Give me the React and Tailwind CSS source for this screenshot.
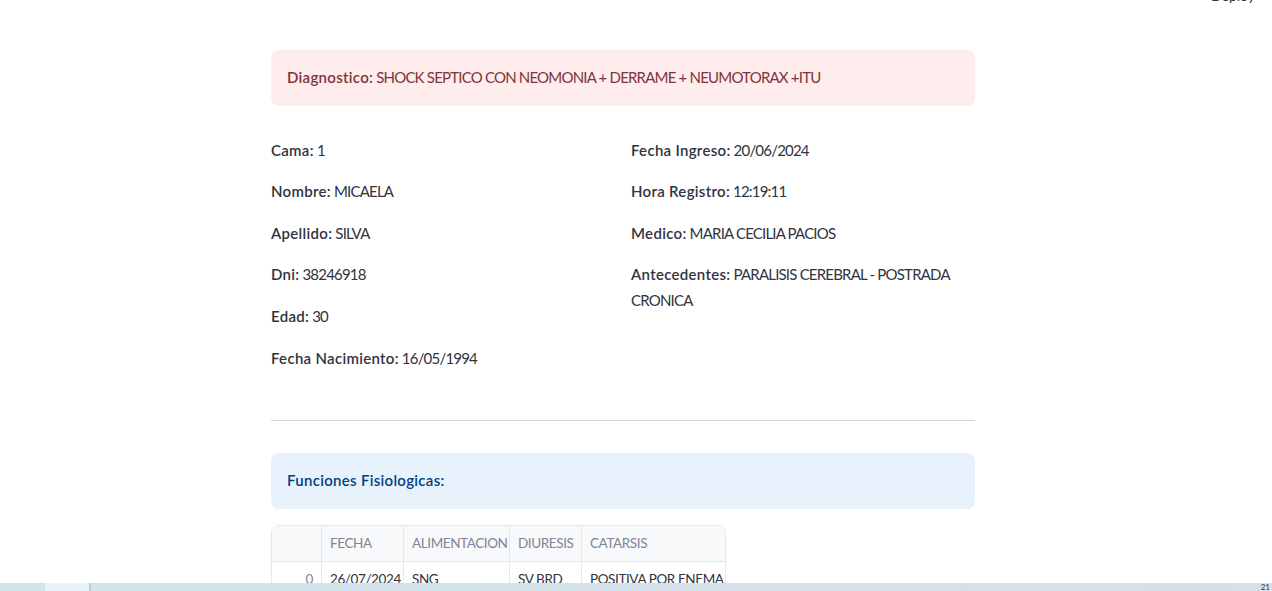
import React from "react";

const left = [
  ["Cama", "1"],
  ["Nombre", "MICAELA"],
  ["Apellido", "SILVA"],
  ["Dni", "38246918"],
  ["Edad", "30"],
  ["Fecha Nacimiento", "16/05/1994"],
];
const right = [
  ["Fecha Ingreso", "20/06/2024"],
  ["Hora Registro", "12:19:11"],
  ["Medico", "MARIA CECILIA PACIOS"],
  ["Antecedentes", "PARALISIS CEREBRAL - POSTRADA CRONICA"],
];

function Field({ k, v }) {
  return (
    <p className="mb-4 leading-[25.6px]">
      <span className="font-semibold tracking-[0.3px]">{k}:</span> {v}
    </p>
  );
}

const cell = "flex h-full shrink-0 items-center border-r border-[#e6e7ea] px-2";

export default function App() {
  return (
    <div
      className="relative h-[591px] w-[1272px] overflow-hidden bg-white text-[15px] tracking-[-0.8px] text-[#31333f]"
      style={{ fontFamily: "Lato, 'Open Sans', sans-serif" }}
    >
      <div className="flex h-0 justify-end pr-[17px]">
        <span className="-mt-[12px] text-[14px] leading-[16px] tracking-[0px] text-[#31333f]">Deploy</span>
      </div>
      <div className="ml-[271px] w-[704px] pt-[50px]">
        <div className="rounded-lg bg-[#ffecec] px-4 py-[15px] leading-[25.6px] text-[#7d353b]">
          <span className="font-semibold tracking-[0.3px]">Diagnostico:</span> SHOCK SEPTICO CON NEOMONIA + DERRAME + NEUMOTORAX +ITU
        </div>
        <div className="mt-[32px] flex gap-4">
          <div className="w-[344px]">
            {left.map(([k, v]) => (
              <Field key={k} k={k} v={v} />
            ))}
          </div>
          <div className="w-[344px]">
            {right.map(([k, v]) => (
              <Field key={k} k={k} v={v} />
            ))}
          </div>
        </div>
        <div className="mt-[33px] h-px bg-[#d6d6d9]" />
        <div className="mt-[32px] rounded-lg bg-[#e8f2fc] px-4 py-[15px] leading-[25.6px] font-semibold tracking-[0.3px] text-[#004280]">
          Funciones Fisiologicas:
        </div>
        <div className="mt-[16px] w-[455px] overflow-hidden rounded-lg border border-[#e6e7ea] text-[13.5px] tracking-[-0.4px] whitespace-nowrap">
          <div className="flex h-[36px] items-center border-b border-[#e6e7ea] bg-[#f8f9fb] text-[#808495]">
            <div className="h-full w-[50px] shrink-0 border-r border-[#e6e7ea]" />
            <div className={`${cell} w-[82px]`}>FECHA</div>
            <div className={`${cell} w-[106px]`}>ALIMENTACION</div>
            <div className={`${cell} w-[72px]`}>DIURESIS</div>
            <div className="flex h-full min-w-0 flex-1 items-center px-2">CATARSIS</div>
          </div>
          <div className="flex h-[35px] items-center">
            <div className={`${cell} w-[50px] justify-end text-[#808495]`}>0</div>
            <div className={`${cell} w-[82px]`}>26/07/2024</div>
            <div className={`${cell} w-[106px]`}>SNG</div>
            <div className={`${cell} w-[72px]`}>SV BRD</div>
            <div className="flex h-full min-w-0 flex-1 items-center px-2">POSITIVA POR ENEMA</div>
          </div>
        </div>
      </div>
      <div className="absolute bottom-0 left-0 flex h-[8px] w-full bg-gradient-to-r from-[#cfe5ec] to-[#d9dee9]">
        <div className="w-[45px]" />
        <div className="w-[44px] bg-[#e8f3f6]" />
        <div className="w-[2px] bg-[#b9cdd6]" />
        <div className="flex-1" />
        <span className="mr-[2px] text-[8px] leading-[8px] tracking-[0px] text-[#31333f]">21</span>
      </div>
    </div>
  );
}
